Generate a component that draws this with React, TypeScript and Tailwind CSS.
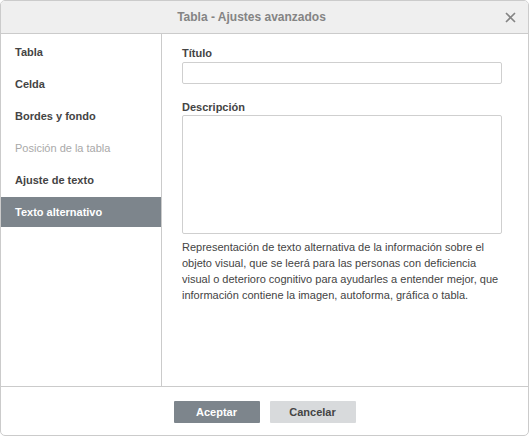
const MENU = [
  { label: "Tabla" },
  { label: "Celda" },
  { label: "Bordes y fondo" },
  { label: "Posición de la tabla", disabled: true },
  { label: "Ajuste de texto" },
  { label: "Texto alternativo", active: true },
];

export default function App() {
  return (
    <div
      className="h-[436px] w-[529px] bg-white text-[11px] text-[#444]"
      style={{ fontFamily: '"Liberation Sans", Arial, sans-serif' }}
    >
      <div className="flex h-full flex-col overflow-hidden rounded-[5px] border border-[#cbcbcb]">
        {/* Header */}
        <div className="relative flex h-[33px] shrink-0 items-center border-b border-[#cbcbcb] bg-[#efefef] pr-[26px]">
          <div className="flex-1 text-center text-[12px] font-bold text-[#848484]">
            Tabla - Ajustes avanzados
          </div>
          <svg
            className="absolute right-[12px] top-[11px]"
            width="11"
            height="11"
            viewBox="0 0 11 11"
          >
            <path d="M1 1L10 10M10 1L1 10" stroke="#848484" strokeWidth="1.6" />
          </svg>
        </div>

        {/* Body */}
        <div className="flex min-h-0 flex-1 border-b border-[#cbcbcb]">
          <div className="flex w-[161px] shrink-0 flex-col gap-[2px] border-r border-[#cbcbcb] pt-[3px]">
            {MENU.map((m) => (
              <div
                key={m.label}
                className={`flex h-[30px] items-center pl-[14px] font-bold ${
                  m.active
                    ? "bg-[#7d858c] text-white"
                    : m.disabled
                      ? "text-[#a9a9a9] font-normal"
                      : "text-[#444]"
                }`}
              >
                {m.label}
              </div>
            ))}
          </div>

          <div className="flex w-[340px] flex-col pl-[20px] pt-[12px]">
            <div className="h-[15px] font-bold leading-[15px]">Título</div>
            <div className="mt-[1px] h-[22px] w-[320px] rounded-[2px] border border-[#cfcfcf]" />
            <div className="mt-[16px] h-[15px] font-bold leading-[15px]">Descripción</div>
            <div className="h-[119px] w-[320px] rounded-[2px] border border-[#cfcfcf]" />
            <p className="mt-[5px] w-[320px] leading-[16px]">
              Representación de texto alternativa de la información sobre el objeto visual, que se leerá
              para las personas con deficiencia visual o deterioro cognitivo para ayudarles a entender
              mejor, que información contiene la imagen, autoforma, gráfica o tabla.
            </p>
          </div>
        </div>

        {/* Footer */}
        <div className="flex h-[48px] shrink-0 items-start justify-center gap-[10px] pt-[14px]">
          <button className="h-[22px] w-[86px] rounded-[1px] bg-[#7d858c] font-bold text-white">
            Aceptar
          </button>
          <button className="h-[22px] w-[86px] rounded-[1px] bg-[#d8dadc] font-bold text-[#444]">
            Cancelar
          </button>
        </div>
      </div>
    </div>
  );
}
